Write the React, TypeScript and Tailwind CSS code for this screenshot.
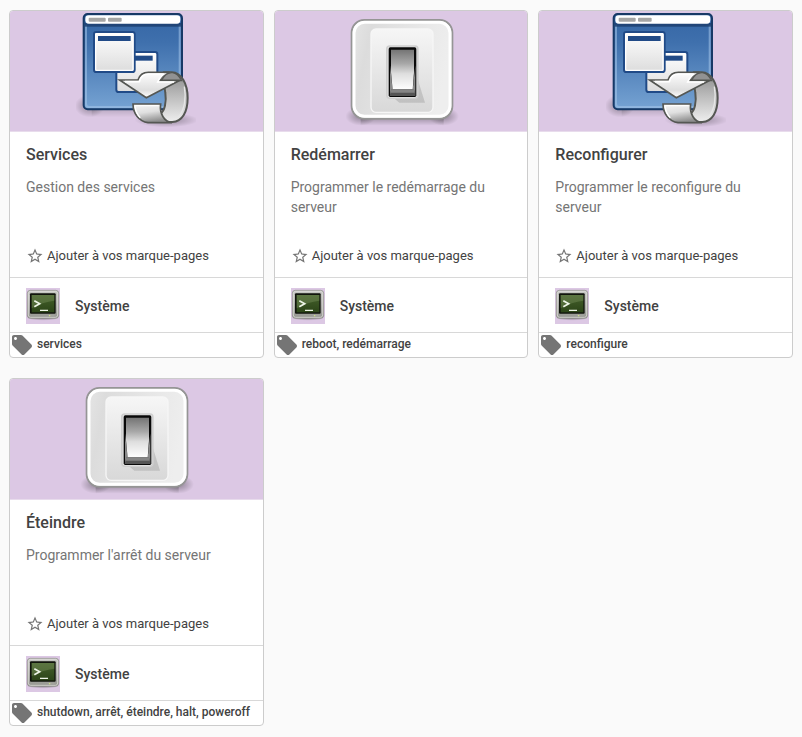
import { MdLocalOffer, MdStarBorder } from 'react-icons/md';

type IconKind = 'windows' | 'switch';

interface ModuleAction {
  id: string;
  title: string;
  description: string;
  icon: IconKind;
  tags: string[];
}

const ACTIONS: ModuleAction[] = [
  {
    id: 'services',
    title: 'Services',
    description: 'Gestion des services',
    icon: 'windows',
    tags: ['services'],
  },
  {
    id: 'reboot',
    title: 'Redémarrer',
    description: 'Programmer le redémarrage du serveur',
    icon: 'switch',
    tags: ['reboot', 'redémarrage'],
  },
  {
    id: 'reconfigure',
    title: 'Reconfigurer',
    description: 'Programmer le reconfigure du serveur',
    icon: 'windows',
    tags: ['reconfigure'],
  },
  {
    id: 'shutdown',
    title: 'Éteindre',
    description: "Programmer l'arrêt du serveur",
    icon: 'switch',
    tags: ['shutdown', 'arrêt', 'éteindre', 'halt', 'poweroff'],
  },
];

// Gradients shared by every icon on the page
function IconDefs() {
  return (
    <svg className="absolute h-0 w-0" aria-hidden="true">
      <defs>
        <linearGradient id="win-bg" x1="0" y1="0" x2="0" y2="1">
          <stop offset="0" stopColor="#3465a4" />
          <stop offset="0.3" stopColor="#3f70ad" />
          <stop offset="1" stopColor="#76a3d3" />
        </linearGradient>
        <linearGradient id="win-pane" x1="0" y1="0" x2="0" y2="1">
          <stop offset="0" stopColor="#ffffff" />
          <stop offset="1" stopColor="#dcdcdc" />
        </linearGradient>
        <linearGradient id="arrow-head" x1="0" y1="0" x2="0" y2="1">
          <stop offset="0" stopColor="#ffffff" />
          <stop offset="0.4" stopColor="#ececec" />
          <stop offset="0.7" stopColor="#dedede" />
          <stop offset="1" stopColor="#ffffff" />
        </linearGradient>
        <linearGradient id="arrow-ring" x1="0" y1="0" x2="0" y2="1">
          <stop offset="0" stopColor="#8a8a8a" />
          <stop offset="0.4" stopColor="#b4b4b4" />
          <stop offset="1" stopColor="#eeeeee" />
        </linearGradient>
        <linearGradient id="arrow-tail" x1="0" y1="0" x2="0.3" y2="1">
          <stop offset="0" stopColor="#f7f7f7" />
          <stop offset="0.5" stopColor="#e0e0e0" />
          <stop offset="1" stopColor="#8f8f8f" />
        </linearGradient>
        <radialGradient id="soft-shadow">
          <stop offset="0" stopColor="#000000" stopOpacity="0.35" />
          <stop offset="1" stopColor="#000000" stopOpacity="0" />
        </radialGradient>
        <linearGradient id="floor-shadow" x1="0" y1="0" x2="0" y2="1">
          <stop offset="0" stopColor="#000000" stopOpacity="0.35" />
          <stop offset="1" stopColor="#000000" stopOpacity="0" />
        </linearGradient>
        <linearGradient id="switch-case" x1="0" y1="0" x2="1" y2="0.2">
          <stop offset="0" stopColor="#e6e6e6" />
          <stop offset="0.2" stopColor="#dcdcdc" />
          <stop offset="0.6" stopColor="#e6e6e6" />
          <stop offset="1" stopColor="#eeeeee" />
        </linearGradient>
        <linearGradient id="switch-plate" x1="0" y1="0" x2="0" y2="1">
          <stop offset="0" stopColor="#f6f6f6" />
          <stop offset="1" stopColor="#d8d8d8" />
        </linearGradient>
        <linearGradient id="switch-rocker" x1="0" y1="0" x2="0" y2="1">
          <stop offset="0" stopColor="#747474" />
          <stop offset="0.35" stopColor="#a8a8a8" />
          <stop offset="0.6" stopColor="#dedede" />
          <stop offset="1" stopColor="#ffffff" />
        </linearGradient>
        <linearGradient id="term-case" x1="0" y1="0" x2="0" y2="1">
          <stop offset="0" stopColor="#c8c8c5" />
          <stop offset="1" stopColor="#969792" />
        </linearGradient>
        <linearGradient id="term-screen" x1="0" y1="0" x2="0" y2="1">
          <stop offset="0" stopColor="#45602c" />
          <stop offset="1" stopColor="#2c4518" />
        </linearGradient>
      </defs>
    </svg>
  );
}

function WindowsIcon() {
  return (
    <svg viewBox="19 18 360 360" className="size-[120px]" aria-hidden="true">
      <ellipse cx="60" cy="303" rx="45" ry="34" fill="url(#soft-shadow)" />
      <rect x="66" y="303" width="200" height="34" fill="url(#floor-shadow)" opacity="0.6" />
      <ellipse cx="290" cy="345" rx="96" ry="22" fill="url(#soft-shadow)" />

      {/* Desktop window */}
      <rect x="42" y="27" width="295" height="286" rx="12" fill="url(#win-bg)" stroke="#173966" strokeWidth="6" />
      <path d="M49 60V297q0 9 9 9H321q9 0 9-9V60" fill="none" stroke="#a5c6ea" strokeOpacity="0.55" strokeWidth="6" />
      <rect x="45" y="54" width="289" height="11" fill="#1d3f70" opacity="0.85" />
      <path d="M57 31H322q10 0 10 10v4q0 11-10 11H57q-10 0-10-11v-4q0-10 10-10z" fill="#ffffff" />
      <rect x="57" y="38" width="51" height="12" rx="3" fill="#a6a6a6" />
      <rect x="115" y="38" width="41" height="12" rx="3" fill="#a6a6a6" />

      {/* Back and front panes */}
      <rect x="140" y="141" width="123" height="120" rx="7" fill="url(#win-pane)" stroke="#204a87" strokeWidth="6" />
      <rect x="151" y="152" width="98" height="15" fill="#204a87" />
      <rect x="73" y="81" width="122" height="120" rx="7" fill="url(#win-pane)" stroke="#204a87" strokeWidth="6" />
      <rect x="78" y="86" width="112" height="110" rx="3" fill="none" stroke="#ffffff" strokeWidth="4" />
      <rect x="85" y="93" width="98" height="15" fill="#204a87" />

      {/* Looping arrow */}
      <g stroke="#555753" strokeWidth="6" strokeLinejoin="miter">
        <path
          d="M282 202H306C336 203 354 237 354 279C354 322 337 350 308 351H282C273 346 270 335 272 326C285 319 291 290 287 264C286 247 280 233 268 226Z"
          fill="url(#arrow-ring)"
        />
        <path d="M275 226C287 205 300 202 309 203C320 205 330 216 336 227Z" fill="#929292" strokeWidth="4" />
        <path
          d="M150 225H205C210 209 221 202 236 202H300C283 204 276 213 269 226H331L230 278Z"
          fill="url(#arrow-head)"
          strokeWidth="5"
        />
        <path
          d="M190 297H273C269 325 283 350 307 353H235C208 349 190 326 190 297Z"
          fill="url(#arrow-tail)"
          strokeWidth="5"
        />
      </g>
      <path d="M166 230H209C213 215 223 207 236 207H283C275 212 269 221 264 231H313" fill="none" stroke="#ffffff" strokeWidth="5" />
      <path d="M344 245C350 278 345 315 326 336" fill="none" stroke="#e6e6e6" strokeWidth="4" />
      <path d="M196 302H267M196 304C198 320 204 330 212 338" fill="none" stroke="#ffffff" strokeWidth="4" />
    </svg>
  );
}

function SwitchIcon() {
  return (
    <svg viewBox="3 17 360 360" className="size-[120px]" aria-hidden="true">
      <ellipse cx="62" cy="333" rx="46" ry="28" fill="url(#soft-shadow)" />
      <ellipse cx="311" cy="333" rx="46" ry="28" fill="url(#soft-shadow)" />
      <rect x="62" y="331" width="249" height="30" fill="url(#floor-shadow)" />

      <rect x="35" y="44" width="302" height="296" rx="38" fill="url(#switch-case)" stroke="#959595" strokeWidth="6" />
      <rect x="42" y="51" width="288" height="282" rx="32" fill="none" stroke="#ffffff" strokeWidth="9" />

      {/* Raised plate */}
      <rect x="93" y="71" width="186" height="250" rx="15" fill="url(#switch-plate)" stroke="#f6f6f6" strokeWidth="4" />
      <path d="M231 214L255 292H178L155 273H228Z" fill="#000000" opacity="0.12" />

      {/* Rocker */}
      <rect x="138" y="120" width="98" height="161" rx="11" fill="#cfcfcf" />
      <rect x="143" y="124" width="88" height="153" rx="7" fill="#e4e4e4" />
      <rect x="146" y="126" width="83" height="149" rx="5" fill="#090909" />
      <path d="M150 180L158 254L150 272ZM226 180L218 254L226 272Z" fill="#8a8a8a" />
      <path d="M153 133H222V200L218 253H158L153 200Z" fill="url(#switch-rocker)" />
      <path d="M154 252H222L226 272H149Z" fill="#555555" />
      <path d="M154 252H222L223 262H152Z" fill="#858585" />
    </svg>
  );
}

function TerminalIcon() {
  return (
    <svg viewBox="78 144 102 108" className="h-9 w-[34px] shrink-0 bg-[#dcc8e4]" aria-hidden="true">
      <ellipse cx="129" cy="234" rx="48" ry="8" fill="url(#soft-shadow)" />
      <rect x="82" y="151" width="94" height="84" rx="9" fill="url(#term-case)" stroke="#858681" strokeWidth="2" />
      <rect x="85" y="154" width="88" height="78" rx="7" fill="none" stroke="#e2e2de" strokeWidth="3" opacity="0.7" />
      <rect x="90" y="160" width="77" height="61" rx="3" fill="#11150d" />
      <rect x="95" y="165" width="68" height="52" fill="url(#term-screen)" />
      <path d="M95 165H163V182C140 184 116 193 95 205Z" fill="#92a875" opacity="0.3" />
      <path d="M103 182L119 191L103 200" fill="none" stroke="#eef5e7" strokeWidth="5" />
      <path d="M120 211H144" stroke="#eef5e7" strokeWidth="4" />
      <path d="M143 226H164" stroke="#a8aaa2" strokeWidth="2" />
      <circle cx="149" cy="227" r="2" fill="#d6ee80" />
    </svg>
  );
}

function ActionCard({ action }: { action: ModuleAction }) {
  return (
    <article className="flex flex-col overflow-hidden rounded border border-[#cccccc] bg-white text-[#424242]">
      <div className="flex h-[121px] justify-center border-b border-[#e8dcec] bg-[#dcc8e4]">
        {action.icon === 'windows' ? <WindowsIcon /> : <SwitchIcon />}
      </div>

      <div className="flex h-[146px] flex-col border-b border-[#d8d8d8] px-4 pt-[11px] pb-3">
        <h2 className="text-base leading-6 font-medium">{action.title}</h2>
        <p className="mt-[10px] text-sm leading-5 text-[#757575]">{action.description}</p>
        <button type="button" className="mt-auto flex cursor-pointer items-center gap-[3px] self-start text-[13px] leading-4">
          <MdStarBorder className="size-[18px] text-[#757575]" />
          Ajouter à vos marque-pages
        </button>
      </div>

      <div className="flex items-center gap-[15px] border-b border-[#d8d8d8] px-4 pt-[10px] pb-2">
        <TerminalIcon />
        <span className="text-sm leading-5 font-medium">Système</span>
      </div>

      <div className="flex items-start gap-[3px] text-xs leading-[22px] font-medium">
        <MdLocalOffer className="size-6 shrink-0 text-[#757575]" />
        <span className="whitespace-nowrap">{action.tags.join(', ')}</span>
      </div>
    </article>
  );
}

export default function App() {
  return (
    <main className="min-h-screen bg-[#fafafa] px-[9px] py-[10px] font-['Roboto',sans-serif]">
      <IconDefs />
      <div className="grid grid-cols-3 gap-x-[10px] gap-y-5">
        {ACTIONS.map((action) => (
          <ActionCard key={action.id} action={action} />
        ))}
      </div>
    </main>
  );
}
